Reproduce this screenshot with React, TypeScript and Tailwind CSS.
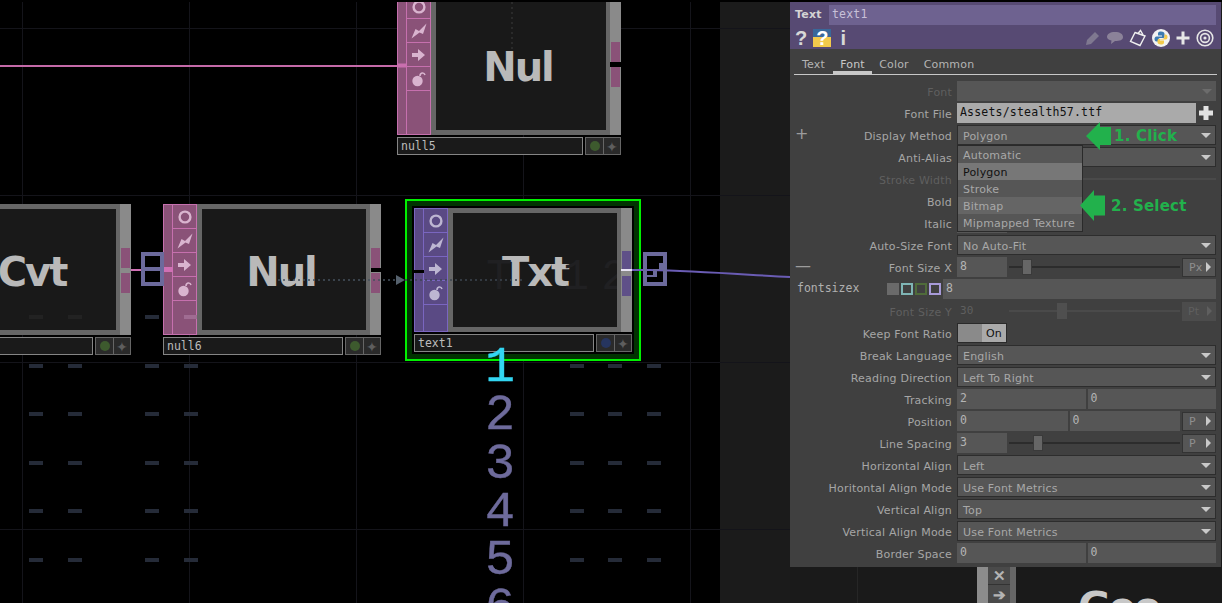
import type { ReactNode } from "react";

const sans = "font-['DejaVu_Sans',sans-serif]";
const mono = "font-['DejaVu_Sans_Mono',monospace]";

type NodeProps = {
  left: number;
  top: number;
  width: number;
  height: number;
  label: string;
  name: string;
  tint: "pink" | "purple";
  dot: string;
  portTop?: number;
  labelShift?: number;
};

const tints = {
  pink: { strip: "bg-[#8a5278]", line: "border-[#c670ae]", port: "bg-[#8a5278]", icon: "#d9b4cf" },
  purple: { strip: "bg-[#5a4a84]", line: "border-[#7a66c0]", port: "bg-[#5f5088]", icon: "#bdb6d2" },
};

function OpIcon({ kind, color }: { kind: number; color: string }) {
  return (
    <svg width="16" height="16" viewBox="0 0 16 16">
      {kind === 0 && <circle cx="8" cy="8" r="5.4" fill="none" stroke={color} strokeWidth="2.4" />}
      {kind === 1 && <path d="M0.5 15.5 L4.5 6 L8 8 L15.5 0.5 L12 11 L8.5 9.5 Z" fill={color} />}
      {kind === 2 && <path d="M1 6 H7 V2 L14 8 L7 14 V10 H1 Z" fill={color} />}
      {kind === 3 && (
        <g>
          <circle cx="6.5" cy="10" r="5.2" fill={color} />
          <path d="M9 5 C9 1.5 13 1 14 4" fill="none" stroke={color} strokeWidth="1.6" />
        </g>
      )}
    </svg>
  );
}

// one operator tile on the network canvas
function OpNode({ left, top, width, height, label, name, tint, dot, portTop = 44, labelShift = 0 }: NodeProps) {
  const t = tints[tint];
  return (
    <div className="absolute" style={{ left, top, width }}>
      <div className="flex" style={{ height }}>
        <div className={`flex w-[34px] border ${t.line} ${t.strip}`}>
          <div className={`w-[9px] border-r ${t.line}`} />
          <div className="flex flex-1 flex-col">
            {[0, 1, 2, 3].map((k) => (
              <div key={k} className={`flex h-[24px] items-center justify-center border-b ${t.line}`}>
                <OpIcon kind={k} color={t.icon} />
              </div>
            ))}
          </div>
        </div>
        <div className="flex flex-1 border-[5px] border-r-[4px] border-[#666666] bg-[#191919]">
          <div
            className="flex flex-1 items-center justify-center pt-[4px] text-[40px] font-bold tracking-[-2px] text-[#b9b9b9] font-['DejaVu_Sans',sans-serif]"
            style={{ paddingRight: labelShift }}
          >
            {label}
          </div>
        </div>
        <div className="flex w-[11px] flex-col gap-[5px] bg-[#8a8a8a]" style={{ paddingTop: portTop }}>
          <div className={`ml-[1px] h-[20px] w-[9px] ${t.port}`} />
          <div className={`ml-[1px] h-[20px] w-[9px] ${t.port}`} />
        </div>
      </div>
      <div className="mt-[2px] flex h-[18px] gap-[2px]">
        <div className={`flex flex-1 items-center border border-[#858585] bg-[#1a1a1a] pl-[3px] pt-[2px] text-[11.5px] text-[#bcbcbc] ${mono}`}>
          {name}
        </div>
        <div className="flex w-[36px] border border-[#666666] bg-[#2a2a2a]">
          <div className="flex w-[18px] items-center justify-center border-r border-[#666666]">
            <div className="h-[10px] w-[10px] rounded-full" style={{ background: dot }} />
          </div>
          <div className="flex flex-1 items-center justify-center text-[14px] text-[#5e5e5e]">✦</div>
        </div>
      </div>
    </div>
  );
}

const dashXs = [29, 68, 145, 184, 570, 608, 647];
const dashYs = [365, 413, 462, 510, 559];

function Canvas() {
  return (
    <div className="absolute inset-0 overflow-hidden bg-black">
      <div className="absolute inset-y-0 left-[720px] right-0 bg-[#1b1b1b]" />
      {[22, 189, 356, 523, 690].map((x) => (
        <div key={x} className="absolute inset-y-0 w-px bg-[#14141a]" style={{ left: x }} />
      ))}
      {[28, 195, 362, 529].map((y) => (
        <div key={y} className="absolute inset-x-0 h-px bg-[#14141a]" style={{ top: y }} />
      ))}
      {dashYs.flatMap((y) =>
        dashXs.map((x) => (
          <div key={`${x}-${y}`} className="absolute h-[4px] w-[14px] bg-[#252b38]" style={{ left: x, top: y - 1 }} />
        )),
      )}
      <div className="absolute left-[145px] top-[315px] h-[4px] w-[14px] bg-[#252b38]" />

      <OpNode left={397} top={-6} width={224} height={141} label="Nul" name="null5" tint="pink" dot="#3d5a2e" portTop={48} labelShift={6} />
      <OpNode left={163} top={204} width={218} height={131} label="Nul" name="null6" tint="pink" dot="#3d5a2e" labelShift={6} />
      <OpNode left={-87} top={204} width={218} height={131} label="Cvt" name="" tint="pink" dot="#3d5a2e" labelShift={4} />
      <div className="absolute left-[29px] top-[315px] h-[4px] w-[14px] bg-[#222222]" />
      <div className="absolute left-[68px] top-[315px] h-[4px] w-[14px] bg-[#222222]" />
      <div className="absolute left-[184px] top-[315px] h-[4px] w-[13px] bg-[#a06c92]" />

      {/* selected text TOP */}
      <div className="absolute left-[405px] top-[199px] h-[162px] w-[236px] border-[2px] border-[#00f000] bg-[#013301]">
        <div className="ml-[5px] mt-[5px] h-[148px] w-[222px] bg-black" />
      </div>
      <OpNode left={414} top={208} width={218} height={124} label="Txt" name="text1" tint="purple" dot="#26355f" portTop={43} />
      <div className="absolute left-[486px] top-[244px] w-[131px] overflow-hidden whitespace-pre text-[44px] tracking-[12px] text-[#202022] font-['Liberation_Mono',monospace]">T 12</div>
      <div className="absolute left-[414px] top-[270px] h-[3px] w-[10px] bg-black" />

      <div className="absolute left-[371px] top-[268px] h-[4px] w-[10px] bg-black" />
      <div className="absolute left-[610px] top-[62px] h-[5px] w-[11px] bg-black" />

      {/* wires */}
      <svg className="absolute inset-0" width="1222" height="603">
        <path d="M0 66 H397" stroke="#c46aa8" strokeWidth="2" fill="none" />
        <path d="M397 65.5 H407" stroke="#c96fae" strokeWidth="4" fill="none" />
        <path d="M131 270 H163" stroke="#d070b4" strokeWidth="2" fill="none" />
        <path d="M163 269.5 H173" stroke="#d070b4" strokeWidth="5" fill="none" />
        <path d="M621 270 H650 C700 271 750 275 790 277" stroke="#6a5cb4" strokeWidth="2" fill="none" />
        <path d="M621 270 H632" stroke="#e8e4f4" strokeWidth="2" fill="none" />
        <path d="M278 280 H396" stroke="#46525e" strokeWidth="1.5" strokeDasharray="2 3" fill="none" />
        <path d="M396 275 L405 280 L396 285 Z" fill="#55616d" />
        <path d="M405 280 H523" stroke="#3d4650" strokeWidth="1.5" strokeDasharray="2 3" fill="none" />
        <path d="M512 2 V50" stroke="#303030" strokeWidth="1.5" strokeDasharray="2 3" fill="none" />
      </svg>

      {/* wire end markers */}
      <div className="absolute left-[141px] top-[252px] h-[34px] w-[23px] border-[4px] border-[#6c6a9c]">
        <div className="mt-[11px] h-[4px] bg-[#6c6a9c]" />
      </div>
      <svg className="absolute left-[643px] top-[252px]" width="24" height="34" viewBox="0 0 24 34">
        <path d="M2 2 H22 V32 H2 Z" fill="none" stroke="#6c6a9c" strokeWidth="4" />
        <path d="M2 23 H10 V17 H16 V11 H20 V18 H14 V25 H2 Z" fill="#6c6a9c" />
      </svg>

      {/* digits coming out of the text TOP */}
      <div className="absolute left-[485px] top-[344px] flex flex-col text-[50px] leading-[48.3px] text-[#6e6b9c] [-webkit-text-stroke:0.4px_currentColor] font-['Liberation_Mono',monospace]">
        <span className="text-[#33d6f2]">1</span>
        <span>2</span>
        <span>3</span>
        <span>4</span>
        <span>5</span>
        <span>6</span>
      </div>

      {/* next node under the panel */}
      <div className="absolute left-[790px] top-[560px] h-[43px] w-[432px] bg-[#1a1a1a]">
        <div className="absolute bottom-0 left-[67px] top-0 w-px bg-[#262626]" />
        <div className="absolute left-[187px] top-0 flex h-full">
          <div className="w-[11px] bg-[#8c8c8c]" />
          <div className="flex w-[22px] flex-col bg-[#4a4a4a] text-center text-[15px] font-bold text-[#b4b4b4]">
            <span className="h-[26px] border-b border-[#333333] pt-[6px] leading-[18px]">✕</span>
            <span className="leading-[18px]">➔</span>
          </div>
          <div className="w-[6px] bg-[#666666]" />
        </div>
        <div className="absolute left-[288px] top-[23px] text-[40px] font-bold leading-[48px] tracking-[-2px] text-[#c8c8c8] font-['DejaVu_Sans',sans-serif]">Geo</div>
      </div>
    </div>
  );
}

function Caret({ dim }: { dim?: boolean }) {
  return <div className={`h-0 w-0 border-x-[5px] border-t-[5px] border-x-transparent ${dim ? "border-t-[#6c6c6c]" : "border-t-[#c9c9c9]"}`} />;
}

function Select({ value }: { value: string }) {
  return (
    <div className="flex h-[20px] flex-1 items-center justify-between border border-[#2d2d2d] bg-[#565656] pl-[5px] pr-[4px] text-[#a8a8a8]">
      <span className="pt-[4px]">{value}</span>
      <Caret />
    </div>
  );
}

function Field({ value, width }: { value?: string; width?: number }) {
  return (
    <div className={`flex h-[20px] items-center bg-[#565656] pl-[3px] text-[#b4b4b4] ${mono} text-[11.5px] ${width ? "" : "flex-1"}`} style={width ? { width } : undefined}>
      {value}
    </div>
  );
}

function Unit({ text, dim }: { text: string; dim?: boolean }) {
  return (
    <div className={`flex h-[19px] w-[34px] items-center justify-between pl-[6px] pr-[4px] ${dim ? "bg-[#4c4c4c] text-[#5f5f5f]" : "border border-[#333333] bg-[#565656] text-[#8f8f8f]"}`}>
      <span className="pt-[2px]">{text}</span>
      <div className={`h-0 w-0 border-y-[5px] border-l-[5px] border-y-transparent ${dim ? "border-l-[#5f5f5f]" : "border-l-[#c9c9c9]"}`} />
    </div>
  );
}

function Slider({ at, dim }: { at: number; dim?: boolean }) {
  return (
    <div className="relative flex h-[20px] flex-1 items-center">
      <div className={`h-[2px] w-full ${dim ? "bg-[#4a4a4a]" : "bg-[#2c2c2c]"}`} />
      <div className={`absolute top-[2px] h-[16px] w-[10px] ${dim ? "bg-[#4f4f4f]" : "border border-[#3a3a3a] bg-[#666666]"}`} style={{ left: at }} />
    </div>
  );
}

function Row({ label, dim, mark, children }: { label?: string; dim?: boolean; mark?: string; children?: ReactNode }) {
  return (
    <div className="relative flex h-[22px] items-center">
      {mark && <span className="absolute left-[5px] top-[-2px] text-[16px] text-[#9c9c9c]">{mark}</span>}
      <div className={`w-[162px] pt-[4px] text-right ${dim ? "text-[#5f5f5f]" : "text-[#a6a6a6]"}`}>{label}</div>
      <div className="ml-[5px] flex w-[259px] items-center gap-[2px]">{children}</div>
    </div>
  );
}

function PanelIcons() {
  return (
    <div className="flex h-[23px] items-center justify-between pl-[5px] pr-[7px]">
      <div className="flex items-center gap-[6px] text-[20px] font-bold leading-none text-[#d8d8d8] font-['Liberation_Sans',sans-serif]">
        <span>?</span>
        <span className="flex h-[18px] w-[18px] items-center justify-center bg-[linear-gradient(180deg,#39689a_45%,#f2c94c_45%)] text-white">?</span>
        <span className="ml-[3px]">i</span>
      </div>
      <div className="flex items-center gap-[5px]">
        <svg width="16" height="16" viewBox="0 0 16 16"><path d="M1 15 L2 10 L10 2 L14 6 L6 14 Z" fill="#7f7890" /></svg>
        <svg width="18" height="14" viewBox="0 0 18 14"><path d="M9 1 C14 1 17 3 17 6 C17 9 14 10 9 10 L5 13 L5.5 9.6 C3 9 1 8 1 6 C1 3 4 1 9 1 Z" fill="#8b8299" /></svg>
        <svg width="18" height="18" viewBox="0 0 18 18">
          <path d="M6 3.5 L16 7 L11 16.5 L1.5 12.5 Z" fill="#574a73" stroke="#f0f0f0" strokeWidth="1.4" />
          <path d="M9 4.5 L11.5 1.5 L14 5.8" fill="none" stroke="#f0f0f0" strokeWidth="1.4" />
        </svg>
        <svg width="18" height="18" viewBox="0 0 18 18">
          <circle cx="9" cy="9" r="9" fill="#f2f2f2" />
          <path d="M9 2.5 C6 2.5 6 4 6 5 V6.5 H10 V7.5 H4.5 C3 7.5 2.5 9 2.5 10 C2.5 11.5 3.2 12.5 4.5 12.5 H6 V11 C6 10 7 9 8 9 H11 C12 9 12.5 8.3 12.5 7.5 V5 C12.5 3.5 11.5 2.5 9 2.5 Z" fill="#3d7bb0" />
          <path d="M9 15.5 C12 15.5 12 14 12 13 V11.5 H8 V10.5 H13.5 C15 10.5 15.5 9 15.5 8 C15.5 6.5 14.8 5.5 13.5 5.5 H12.5 V7.5 C12.5 9 11.5 10 10 10 H7 C6 10 5.5 10.7 5.5 11.5 V13 C5.5 14.5 6.5 15.5 9 15.5 Z" fill="#f2c94c" />
        </svg>
        <svg width="16" height="16" viewBox="0 0 16 16"><path d="M6.5 1.5 H9.5 V6.5 H14.5 V9.5 H9.5 V14.5 H6.5 V9.5 H1.5 V6.5 H6.5 Z" fill="#e6e6e6" /></svg>
        <svg width="18" height="18" viewBox="0 0 18 18" fill="none" stroke="#e6e6e6">
          <circle cx="9" cy="9" r="7.8" strokeWidth="1.6" />
          <circle cx="9" cy="9" r="4.4" strokeWidth="1.6" />
          <circle cx="9" cy="9" r="1.6" fill="#e6e6e6" stroke="none" />
        </svg>
      </div>
    </div>
  );
}

function DropdownMenu() {
  const items = ["Automatic", "Polygon", "Stroke", "Bitmap", "Mipmapped Texture"];
  return (
    <div className="absolute left-[167px] top-[143px] w-[126px] border border-[#2a2a2a] bg-[#565656]">
      {items.map((item) => (
        <div
          key={item}
          className={`flex h-[17px] items-center pl-[5px] pt-[3px] ${item === "Polygon" ? "bg-[#777777] text-[#111111]" : item === "Bitmap" ? "bg-[#656565] text-[#a8a8a8]" : "text-[#a8a8a8]"}`}
        >
          {item}
        </div>
      ))}
    </div>
  );
}

function Annotation({ left, top, text, h, textLeft }: { left: number; top: number; text: string; h: number; textLeft: number }) {
  return (
    <>
      <svg className="absolute" style={{ left, top }} width="25" height={h} viewBox={`0 0 25 ${h}`}>
        <path d={`M0 ${h / 2} L14 0 V${h * 0.18} H25 V${h * 0.82} H14 V${h} Z`} fill="#22b14c" />
      </svg>
      <div className="absolute text-[15px] font-bold leading-[16px] text-[#22b14c]" style={{ left: textLeft, top: top + h / 2 - 8 }}>
        {text}
      </div>
    </>
  );
}

const tabs = [
  { name: "Text", w: "w-[39px]" },
  { name: "Font", w: "w-[39px]" },
  { name: "Color", w: "w-[44px]" },
  { name: "Common", w: "w-[66px]" },
];

function ParamPanel() {
  return (
    <div className={`absolute left-[790px] top-[2px] h-[565px] w-[431px] bg-[#404040] text-[11px] tracking-[0.2px] ${sans}`}>
      <div className="bg-[#574a73]">
        <div className="flex h-[24px] items-center pl-[5px] pr-[5px] pt-[2px]">
          <span className="w-[34px] text-[11px] font-bold text-[#d4d4d4]">Text</span>
          <div className={`flex h-[20px] flex-1 items-center bg-[#6e6290] pl-[3px] text-[11.5px] text-[#c8c0d8] ${mono}`}>text1</div>
        </div>
        <PanelIcons />
      </div>

      <div className="mx-[4px] flex h-[26px] items-end border-b border-[#c8c8c8] text-[#b4b4b4]">
        {tabs.map((tab) => (
          <div
            key={tab.name}
            className={`h-[17px] text-center leading-[15px] ${tab.w} ${tab.name === "Font" ? "border-b-[3px] border-[#c8c8c8] text-[#c8c8c8]" : ""}`}
          >
            {tab.name}
          </div>
        ))}
      </div>

      <div className="pt-[5px]">
        <Row label="Font" dim>
          <div className="flex h-[20px] flex-1 items-center justify-end bg-[#565656] pr-[4px]"><Caret dim /></div>
        </Row>
        <Row label="Font File">
          <div className={`flex h-[20px] w-[239px] items-center bg-[#aaaaaa] pl-[3px] text-[11.5px] text-[#111111] ${mono}`}>Assets/stealth57.ttf</div>
          <svg width="16" height="16" viewBox="0 0 16 16"><path d="M5.5 1 H10.5 V5.5 H15 V10.5 H10.5 V15 H5.5 V10.5 H1 V5.5 H5.5 Z" fill="#e2e2e2" /></svg>
        </Row>
        <Row label="Display Method" mark="+"><Select value="Polygon" /></Row>
        <Row label="Anti-Alias"><Select value="" /></Row>
        <Row label="Stroke Width" dim><div className="ml-[126px] h-[2px] flex-1 bg-[#4a4a4a]" /></Row>
        <Row label="Bold"><Field width={50} /></Row>
        <Row label="Italic"><Field width={50} /></Row>
        <Row label="Auto-Size Font"><Select value="No Auto-Fit" /></Row>
        <Row label="Font Size X" mark="—">
          <Field value="8" width={50} />
          <Slider at={13} />
          <Unit text="Px" />
        </Row>
        <div className="flex h-[22px] items-center">
          <div className={`w-[97px] pl-[7px] text-[11.5px] tracking-normal text-[#b0b0b0] ${mono}`}>fontsizex</div>
          <div className="flex items-center gap-[2px]">
            <div className="h-[12px] w-[12px] bg-[#6a6a6a]" />
            <div className="h-[12px] w-[12px] border-2 border-[#7fb5b5]" />
            <div className="h-[12px] w-[12px] border-2 border-[#4f6b3a]" />
            <div className="h-[12px] w-[12px] border-2 border-[#a79ad8]" />
          </div>
          <div className="ml-[2px] flex w-[273px]"><Field value="8" /></div>
        </div>
        <Row label="Font Size Y" dim>
          <div className={`flex h-[20px] w-[50px] items-center pl-[3px] text-[#5f5f5f] ${mono}`}>30</div>
          <Slider at={48} dim />
          <Unit text="Pt" dim />
        </Row>
        <Row label="Keep Font Ratio">
          <div className="flex h-[20px] w-[50px] border border-[#2a2a2a]">
            <div className="w-[24px] bg-[#8a8a8a]" />
            <div className="flex flex-1 items-center justify-center bg-[#aaaaaa] pt-[2px] text-[#111111]">On</div>
          </div>
        </Row>
        <Row label="Break Language"><Select value="English" /></Row>
        <Row label="Reading Direction"><Select value="Left To Right" /></Row>
        <Row label="Tracking"><Field value="2" /><Field value="0" /></Row>
        <Row label="Position"><Field value="0" /><Field value="0" /><Unit text="P" /></Row>
        <Row label="Line Spacing">
          <Field value="3" width={50} />
          <Slider at={24} />
          <Unit text="P" />
        </Row>
        <Row label="Horizontal Align"><Select value="Left" /></Row>
        <Row label="Horitontal Align Mode"><Select value="Use Font Metrics" /></Row>
        <Row label="Vertical Align"><Select value="Top" /></Row>
        <Row label="Vertical Align Mode"><Select value="Use Font Metrics" /></Row>
        <Row label="Border Space"><Field value="0" /><Field value="0" /></Row>
      </div>

      <DropdownMenu />
      <Annotation left={296} top={120} h={28} text="1. Click" textLeft={324} />
      <Annotation left={290} top={188} h={31} text="2. Select" textLeft={321} />
    </div>
  );
}

export default function App() {
  return (
    <div className="relative h-[603px] w-[1222px] overflow-hidden bg-black">
      <Canvas />
      <div className="absolute inset-x-0 top-0 h-[2px] bg-black" />
      <ParamPanel />
    </div>
  );
}
